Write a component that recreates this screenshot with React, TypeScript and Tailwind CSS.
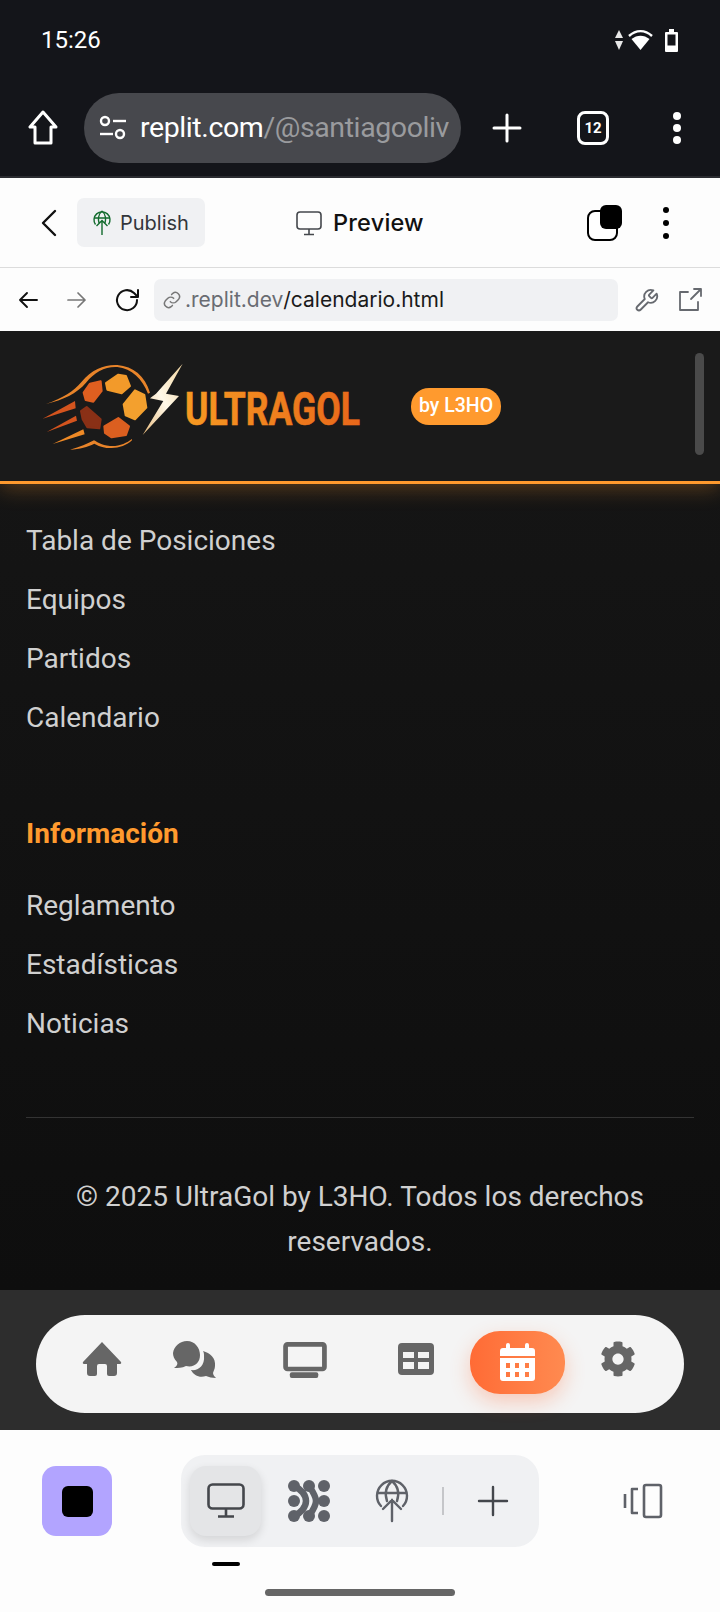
import React from "react";
import { FaCog } from "react-icons/fa";

function Logo() {
  return (
    <svg viewBox="30 350 340 110" className="w-[340px] h-[110px] shrink-0">
      <defs>
        <linearGradient id="word" x1="0" y1="0" x2="1" y2="0">
          <stop offset="0" stopColor="#f79a22" />
          <stop offset="1" stopColor="#e8671a" />
        </linearGradient>
        <linearGradient id="bolt" x1="1" y1="0" x2="0" y2="1">
          <stop offset="0" stopColor="#f3d6a0" />
          <stop offset="0.5" stopColor="#fff8e8" />
          <stop offset="1" stopColor="#e6b878" />
        </linearGradient>
      </defs>
      <g transform="translate(30 350) scale(0.3333)">
        <path d="M48 159C100 140 130 122 155 92C185 55 225 40 262 42C310 46 345 75 360 125L354 128C338 85 305 52 262 48C225 46 195 62 168 95C140 128 100 146 48 159Z" fill="#e8842a" />
        <path d="M120 296C150 288 172 278 192 268C205 275 212 282 240 285C268 287 290 276 306 264L306 268C290 284 262 293 238 291C215 290 205 284 193 278C172 288 150 294 120 296Z" fill="#e8842a" />
        <path d="M38 203L135 150L137 172Z" fill="#d4541e" />
        <path d="M50 243L138 194L141 209Z" fill="#d4541e" />
        <path d="M68 279L160 235L164 250Z" fill="#ef8a26" />
        <g strokeWidth="6" strokeLinejoin="round">
          <polygon points="228,96 265,71 288,75 300,105 275,127 232,116" fill="#f29a2a" stroke="#f29a2a" />
          <polygon points="281,160 315,118 343,132 349,170 315,205 287,193" fill="#f3a02e" stroke="#f3a02e" />
          <polygon points="223,226 265,201 297,226 288,252 245,259 225,246" fill="#db5f20" stroke="#db5f20" />
          <polygon points="153,180 170,168 212,205 208,232 172,229 158,205" fill="#8a3016" stroke="#8a3016" />
          <polygon points="161,125 180,98 212,91 215,120 190,152 167,147" fill="#df5f20" stroke="#df5f20" />
        </g>
        <path d="M458 38L378 128L360 142L400 150L338 252L447 135L408 128Z" fill="url(#bolt)" />
      </g>
      <text x="185" y="424" fontFamily="Roboto, sans-serif" fontWeight="700" fontSize="46" textLength="175" lengthAdjust="spacingAndGlyphs" fill="url(#word)" stroke="url(#word)" strokeWidth="0.6">ULTRAGOL</text>
    </svg>
  );
}

function NavLink({ children }: { children: React.ReactNode }) {
  return <div className="h-[59px] flex items-center text-[28px] text-[#d0d0d0]">{children}</div>;
}

function StatusBar() {
  return (
    <div className="h-[80px] flex items-center justify-between pl-[41px] pr-[41px]">
      <span className="text-[24px] text-white">15:26</span>
      <div className="flex items-center">
        <svg width="10" height="24" viewBox="0 0 10 24" fill="#e8e8e8">
          <path d="M5 2L9 10H1Z" /><path d="M5 22L1 13H9Z" />
        </svg>
        <svg width="27" height="24" viewBox="0 0 27 24" className="ml-[3px]">
          <path d="M13.5 22L4.5 11C10 6.5 17 6.5 22.5 11Z" fill="white" />
          <path d="M2 8C9 1.5 18 1.5 25 8" fill="none" stroke="white" strokeWidth="2.4" />
        </svg>
        <svg width="15" height="24" viewBox="0 0 15 24" fill="none" className="ml-[10px]">
          <path d="M5 1h5v3h3a1 1 0 0 1 1 1v18a1 1 0 0 1-1 1H2a1 1 0 0 1-1-1V5a1 1 0 0 1 1-1h3Z" fill="white" />
          <rect x="3.5" y="6.5" width="8" height="11" fill="#14151a" />
        </svg>
      </div>
    </div>
  );
}

function BrowserBar() {
  return (
    <div className="h-[96px] flex items-center pl-[28px]">
      <svg width="30" height="36" viewBox="0 0 30 36" fill="none" stroke="white" strokeWidth="3" strokeLinejoin="round">
        <path d="M15 2L2 17H7V33H23V17H28Z" />
      </svg>
      <div className="ml-[26px] w-[377px] h-[70px] rounded-[35px] bg-[#47484d] flex items-center pl-[14px] pr-[13px]">
        <svg width="30" height="26" viewBox="0 0 30 26" fill="none" stroke="white" strokeWidth="2.4" className="shrink-0">
          <circle cx="7" cy="6" r="4" /><path d="M15 6H28" /><circle cx="22" cy="19" r="4" /><path d="M2 19H15" />
        </svg>
        <div className="ml-[12px] whitespace-nowrap text-[28.5px] tracking-[-0.4px]">
          <span className="text-white">replit.com</span>
          <span className="text-[#9a9b9e]">/@santiagooliv</span>
        </div>
      </div>
      <svg width="30" height="30" viewBox="0 0 30 30" stroke="white" strokeWidth="3" strokeLinecap="round" className="ml-[31px]">
        <path d="M15 2V28M2 15H28" />
      </svg>
      <div className="ml-[55px] w-[32px] h-[34px] rounded-[8px] border-[3px] border-white flex items-center justify-center text-white text-[15px] font-bold">12</div>
      <div className="ml-[64px] flex flex-col gap-[4px]">
        <div className="w-[8px] h-[8px] rounded-full bg-white" />
        <div className="w-[8px] h-[8px] rounded-full bg-white" />
        <div className="w-[8px] h-[8px] rounded-full bg-white" />
      </div>
    </div>
  );
}

function AppHeader() {
  const f = { fontFamily: "Inter, sans-serif" };
  return (
    <div className="h-[90px] bg-[#fdfdfd] border-b border-[#dcdcdc] flex items-center pl-[40px] text-[#111]" style={f}>
      <svg width="18" height="28" viewBox="0 0 18 28" fill="none" stroke="#111" strokeWidth="2.4" strokeLinecap="round" strokeLinejoin="round">
        <path d="M15 2L3 14L15 26" />
      </svg>
      <div className="ml-[19px] w-[128px] h-[49px] rounded-[7px] bg-[#f0f1f3] flex items-center pl-[15px]">
        <svg width="20" height="26" viewBox="0 0 20 26" fill="none" stroke="#126b2d" strokeWidth="1.4">
          <path d="M3.5 14.5A8 8 0 1 1 16.5 14.5" /><path d="M10 1C6 4 6 10 7 13M10 1C14 4 14 10 13 13M2 8H18M10 25V11M4.5 16L10 10.5L15.5 16" />
        </svg>
        <span className="ml-[8px] text-[20px] text-[#33363b]">Publish</span>
      </div>
      <svg width="26" height="26" viewBox="0 0 26 26" fill="none" stroke="#44474c" strokeWidth="1.6" className="ml-[91px]">
        <rect x="1" y="2" width="24" height="17" rx="3" /><path d="M13 19V24M8 24.5H18" />
      </svg>
      <span className="ml-[11px] text-[23.5px] font-medium tracking-[0.2px]">Preview</span>
      <div className="ml-[163px] relative w-[35px] h-[36px]">
        <div className="absolute left-0 bottom-0 w-[31px] h-[31px] rounded-[8px] border-[2.5px] border-black bg-white" />
        <div className="absolute right-0 top-0 w-[22px] h-[24px] rounded-[6px] bg-black" />
      </div>
      <div className="ml-[41px] flex flex-col gap-[7px]">
        <div className="w-[6px] h-[6px] rounded-full bg-black" />
        <div className="w-[6px] h-[6px] rounded-full bg-black" />
        <div className="w-[6px] h-[6px] rounded-full bg-black" />
      </div>
    </div>
  );
}

function UrlRow() {
  return (
    <div className="h-[63px] bg-[#fdfdfd] flex items-center pl-[18px]" style={{ fontFamily: "Inter, sans-serif" }}>
      <svg width="20" height="20" viewBox="0 0 20 20" fill="none" stroke="#111" strokeWidth="1.9" strokeLinecap="round" strokeLinejoin="round"><path d="M19 10H2M9 3L2 10L9 17" /></svg>
      <svg width="20" height="20" viewBox="0 0 20 20" fill="none" stroke="#777" strokeWidth="1.7" strokeLinecap="round" strokeLinejoin="round" className="ml-[29px]"><path d="M1 10H18M11 3L18 10L11 17" /></svg>
      <svg width="26" height="26" viewBox="0 0 26 26" fill="none" stroke="#111" strokeWidth="2" strokeLinecap="round" strokeLinejoin="round" className="ml-[27px]"><path d="M23 13A10 10 0 1 1 20 6L24 10M24 3V10H17" /></svg>
      <div className="ml-[14px] w-[464px] h-[42px] rounded-[7px] bg-[#f0f1f3] flex items-center pl-[8px] text-[21px]">
        <svg width="20" height="20" viewBox="0 0 24 24" fill="none" stroke="#777" strokeWidth="1.8" strokeLinecap="round"><path d="M10 14a5 5 0 0 0 7 0l3-3a5 5 0 0 0-7-7l-1.5 1.5" /><path d="M14 10a5 5 0 0 0-7 0l-3 3a5 5 0 0 0 7 7l1.5-1.5" /></svg>
        <span className="ml-[3px] text-[#696c72]">.replit.dev</span>
        <span className="text-[#1a1a1a]">/calendario.html</span>
      </div>
      <svg width="26" height="26" viewBox="0 0 24 24" fill="none" stroke="#66696f" strokeWidth="1.7" strokeLinejoin="round" className="ml-[15px]">
        <path d="M15 7a1 1 0 0 0 0 1.4l1.6 1.6a1 1 0 0 0 1.4 0l3.8-3.8a6 6 0 0 1-7.9 7.9l-6.9 6.9a2.1 2.1 0 0 1-3-3l6.9-6.9a6 6 0 0 1 7.9-7.9Z" />
      </svg>
      <svg width="26" height="26" viewBox="0 0 26 26" fill="none" stroke="#66696f" strokeWidth="1.8" strokeLinecap="round" strokeLinejoin="round" className="ml-[18px]">
        <path d="M11 5H3V23H21V15M14 12L24 2M17 2H24V9" />
      </svg>
    </div>
  );
}

function Page() {
  return (
    <div className="relative h-[959px] bg-gradient-to-b from-[#161616] to-[#0e0e0e] overflow-hidden" style={{ fontFamily: "Roboto, sans-serif" }}>
      <div className="h-[153px] bg-[#1a1a1a] border-b-[3px] border-[#ff9a2e] shadow-[0_4px_20px_rgba(255,154,46,0.3)] flex items-center">
        <div className="pl-[30px] w-[381px]"><Logo /></div>
        <div className="ml-[30px] h-[37px] px-[8px] rounded-[18px] bg-[#ff9a2e] text-white text-[19.5px] font-medium flex items-center">by L3HO</div>
      </div>
      <div className="px-[26px] pt-[27px]">
        <NavLink>Tabla de Posiciones</NavLink>
        <NavLink>Equipos</NavLink>
        <NavLink>Partidos</NavLink>
        <NavLink>Calendario</NavLink>
        <div className="mt-[69px] mb-[24px] text-[#ff9a2e] text-[28px] font-bold h-[36px] flex items-center">Información</div>
        <NavLink>Reglamento</NavLink>
        <NavLink>Estadísticas</NavLink>
        <NavLink>Noticias</NavLink>
        <div className="mt-[64px] border-t border-[#333]" />
        <div className="mt-[56px] text-center text-[28px] leading-[45px] text-[#d0d0d0] px-[20px]">
          © 2025 UltraGol by L3HO. Todos los derechos reservados.
        </div>
      </div>
      <div className="absolute right-[16px] top-[22px] w-[9px] h-[102px] rounded-full bg-[#4a4a4a]" />
    </div>
  );
}

function BottomNav() {
  return (
    <div className="h-[140px] bg-[#2d2d2d] flex items-center justify-center pt-[7px]">
      <div className="w-[648px] h-[98px] rounded-[49px] bg-[#f4f4f4] flex items-center text-[#666] pb-[3px]">
        <svg width="40" height="36" viewBox="0 0 40 36" fill="#666" className="ml-[46px] mb-[7px]">
          <path d="M20 1L39 21C39.5 22 39 23 38 23H35V32a3 3 0 0 1-3 3H27a2 2 0 0 1-2-2V25a2 2 0 0 0-2-2H17a2 2 0 0 0-2 2V33a2 2 0 0 1-2 2H8a3 3 0 0 1-3-3V23H2C1 23 .5 22 1 21Z" />
        </svg>
        <svg width="44" height="38" viewBox="0 0 44 38" fill="#666" className="ml-[50px] mb-[7px]">
          <path d="M15 1C23 1 28 8 28 15C28 23 22 28 14 26C10 28 6 28 2 28C5 26 6 24 5 22C2 19 1 16 1 13C2 6 8 1 15 1Z" />
          <path d="M31 11C38 13 44 18 43 26C43 29 41 32 41 33C41 35 43 37 44 38C40 38 37 37 34 36C28 38 22 36 19 30C26 31 33 26 32 16C32 14 32 13 31 11Z" />
        </svg>
        <svg width="46" height="36" viewBox="0 0 46 38" fill="none" className="ml-[66px] mb-[5px]">
          <rect x="2.5" y="2.5" width="41" height="26" rx="2" stroke="#666" strokeWidth="5" />
          <rect x="7" y="32" width="30" height="6" rx="2" fill="#666" />
        </svg>
        <svg width="36" height="32" viewBox="0 0 36 32" fill="#666" className="ml-[70px] mb-[7px]">
          <path fillRule="evenodd" d="M4 0H32a4 4 0 0 1 4 4V28a4 4 0 0 1-4 4H4a4 4 0 0 1-4-4V4a4 4 0 0 1 4-4ZM5 9V15H16V9ZM20 9V15H31V9ZM5 19V26H16V19ZM20 19V26H31V19Z" />
        </svg>
        <div className="ml-[36px] w-[95px] h-[63px] rounded-[30px] bg-gradient-to-r from-[#ff6b35] to-[#ff8a50] shadow-[0_8px_20px_rgba(255,107,53,0.3)] flex items-center justify-center">
          <svg width="35" height="38" viewBox="0 0 35 38" fill="white">
            <path fillRule="evenodd" d="M8 0a2 2 0 0 1 2 2V5H25V2a2 2 0 0 1 4 0V5H32a3 3 0 0 1 3 3V13H0V8a3 3 0 0 1 3-3H6V2a2 2 0 0 1 2-2ZM0 15H35V35a3 3 0 0 1-3 3H3a3 3 0 0 1-3-3ZM6 20V25H10V20ZM15 20V25H19V20ZM25 20V25H29V20ZM6 29V34H10V29ZM15 29V34H19V29ZM25 29V34H29V29Z" />
          </svg>
        </div>
        <FaCog className="ml-[35px] mb-[7px] w-[36px] h-[36px] text-[#666]" />
      </div>
    </div>
  );
}

function BottomBar() {
  return (
    <div className="flex-1 bg-[#fdfdfd]">
      <div className="flex items-center pt-[25px] pl-[42px]">
        <div className="w-[70px] h-[70px] rounded-[14px] bg-[#b2a4ff] flex items-center justify-center">
          <div className="w-[31px] h-[31px] rounded-[6px] bg-black" />
        </div>
        <div className="ml-[69px] w-[358px] h-[92px] rounded-[24px] bg-[#f0f1f3] flex items-center pl-[9px]">
          <div className="w-[71px] h-[70px] rounded-[16px] bg-[#e4e5e7] shadow-[0_4px_10px_rgba(0,0,0,0.12)] flex items-center justify-center">
            <svg width="38" height="36" viewBox="0 0 38 36" fill="none" stroke="#44474c" strokeWidth="2.6">
              <rect x="1.5" y="1.5" width="35" height="24" rx="4" /><path d="M19 26V33M11 33.5H27" />
            </svg>
          </div>
          <svg width="42" height="42" viewBox="0 0 42 42" fill="none" className="ml-[27px]">
            <g fill="#5f6269">
              <circle cx="6" cy="6" r="6" /><circle cx="21" cy="6" r="6" /><circle cx="36" cy="6" r="6" />
              <circle cx="6" cy="21" r="6" /><circle cx="36" cy="21" r="6" />
              <circle cx="6" cy="36" r="6" /><circle cx="21" cy="36" r="6" /><circle cx="36" cy="36" r="6" />
            </g>
            <g stroke="#5f6269" strokeWidth="6.5" strokeLinecap="round">
              <path d="M6 6C13 9 18 15 18 21C18 27 13 33 6 36" />
              <path d="M21 6C25 12 28 16 28 21C28 26 25 30 21 36" />
            </g>
          </svg>
          <svg width="34" height="44" viewBox="0 0 34 44" fill="none" stroke="#5f6269" strokeWidth="2.4" strokeLinecap="round" className="ml-[45px]">
            <path d="M6 27A15 15 0 1 1 28 27" /><path d="M17 2C10 8 10 16 12 22M17 2C24 8 24 16 22 22M3 14H31" /><path d="M17 42V21M8 30L17 21L26 30" />
          </svg>
          <div className="ml-[33px] w-[2px] h-[28px] bg-[#c5c6c9]" />
          <svg width="32" height="32" viewBox="0 0 32 32" stroke="#44474c" strokeWidth="2.4" strokeLinecap="round" className="ml-[33px]">
            <path d="M16 2V30M2 16H30" />
          </svg>
        </div>
        <svg width="40" height="36" viewBox="0 0 40 36" fill="none" stroke="#5f6269" strokeWidth="2.6" strokeLinejoin="round" className="ml-[84px]">
          <path d="M2 11V25M15 6H9V30H15" /><rect x="21" y="2" width="17" height="32" rx="2" />
        </svg>
      </div>
      <div className="mt-[15px] ml-[212px] w-[28px] h-[4px] rounded-full bg-black" />
      <div className="mt-[23px] ml-[265px] w-[190px] h-[7px] rounded-full bg-[#666]" />
    </div>
  );
}

export default function App() {
  return (
    <div className="w-[720px] h-[1612px] flex flex-col overflow-hidden bg-[#14151a]" style={{ fontFamily: "Roboto, sans-serif" }}>
      <StatusBar />
      <BrowserBar />
      <div className="h-[2px] bg-[#2b2c31]" />
      <AppHeader />
      <UrlRow />
      <Page />
      <BottomNav />
      <BottomBar />
    </div>
  );
}
